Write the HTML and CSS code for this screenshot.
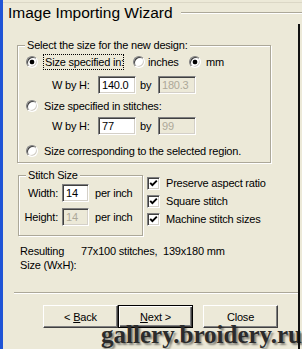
FILE: index.html
```html
<!DOCTYPE html>
<html>
<head>
<meta charset="utf-8">
<link rel="stylesheet" href="styles.css">
</head>
<body>
<div class="window">
  <div class="topline"></div>
  <div class="title-row">
    <span class="title">Image Importing Wizard</span>
    <span class="etch"></span>
  </div>

  <div class="group group-size">
    <div class="group-title">Select the size for the new design:</div>
    <div class="row r1">
      <span class="radio checked"></span>
      <span class="lbl focus">Size specified in:</span>
      <span class="radio r-inches"></span>
      <span class="lbl lbl-inches">inches</span>
      <span class="radio checked r-mm"></span>
      <span class="lbl lbl-mm">mm</span>
    </div>
    <div class="row r2">
      <span class="wbh">W by H:</span>
      <input class="field" type="text" value="140.0">
      <span class="by">by</span>
      <input class="field" type="text" value="180.3" disabled>
    </div>
    <div class="row r3">
      <span class="radio"></span>
      <span class="lbl">Size specified in stitches:</span>
    </div>
    <div class="row r4">
      <span class="wbh">W by H:</span>
      <input class="field" type="text" value="77">
      <span class="by">by</span>
      <input class="field" type="text" value="99" disabled>
    </div>
    <div class="row r5">
      <span class="radio"></span>
      <span class="lbl">Size corresponding to the selected region.</span>
    </div>
  </div>

  <div class="stitch-row">
    <div class="group group-stitch">
      <div class="group-title">Stitch Size</div>
      <div class="row s1">
        <span class="slbl">Width:</span>
        <input class="field narrow" type="text" value="14">
        <span class="unit">per inch</span>
      </div>
      <div class="row s2">
        <span class="slbl">Height:</span>
        <input class="field narrow" type="text" value="14" disabled>
        <span class="unit">per inch</span>
      </div>
    </div>
    <div class="checks">
      <div class="row check-row">
        <span class="checkbox"><svg width="9" height="9" viewBox="0 0 9 9"><path d="M1.2 3.8 L3.4 6.2 L7.8 1.6" fill="none" stroke="#000" stroke-width="1.9"/></svg></span>
        <span class="clbl">Preserve aspect ratio</span>
      </div>
      <div class="row check-row">
        <span class="checkbox"><svg width="9" height="9" viewBox="0 0 9 9"><path d="M1.2 3.8 L3.4 6.2 L7.8 1.6" fill="none" stroke="#000" stroke-width="1.9"/></svg></span>
        <span class="clbl">Square stitch</span>
      </div>
      <div class="row check-row">
        <span class="checkbox"><svg width="9" height="9" viewBox="0 0 9 9"><path d="M1.2 3.8 L3.4 6.2 L7.8 1.6" fill="none" stroke="#000" stroke-width="1.9"/></svg></span>
        <span class="clbl">Machine stitch sizes</span>
      </div>
    </div>
  </div>

  <div class="result">
    <div class="result-label">Resulting<br>Size (WxH):</div>
    <div class="result-value">77x100 stitches,&nbsp; 139x180 mm</div>
  </div>

  <div class="sep"></div>

  <div class="buttons">
    <button class="btn">&lt; <u>B</u>ack</button>
    <button class="btn btn-default"><u>N</u>ext &gt;</button>
    <button class="btn btn-close">Close</button>
  </div>

  <div class="watermark">gallery.broidery.ru</div>
</div>
</body>
</html>
```
FILE: styles.css
```css
* { box-sizing: border-box; }

html, body {
  margin: 0;
  padding: 0;
}

body {
  width: 302px;
  height: 349px;
  overflow: hidden;
  background: #ECE9D8;
  font-family: "Liberation Sans", Arial, sans-serif;
  font-size: 11px;
  letter-spacing: -0.2px;
  color: #000;
}

.window {
  position: relative;
  width: 302px;
  height: 349px;
  border-left: 3px solid #1f54d6;
  background: #ECE9D8;
  padding-top: 2px;
}

.window::after {
  content: "";
  position: absolute;
  left: 295px;
  top: 24px;
  bottom: 0;
  width: 2px;
  background: #111;
}

.topline {
  height: 1px;
  background: #dbd7c6;
}

.title-row {
  display: flex;
  align-items: flex-start;
  height: 23px;
  padding-left: 5px;
}

.title {
  font-size: 15.5px;
  letter-spacing: 0;
  line-height: 18px;
  margin-top: 1px;
  white-space: nowrap;
}

.etch {
  flex: 1;
  margin-top: 9px;
  margin-left: 8px;
  height: 2px;
  border-top: 1px solid #aca899;
  border-bottom: 1px solid #fff;
}

.group {
  border: 1px solid #aca899;
  box-shadow: inset 1px 1px 0 #fff, 1px 1px 0 #fff;
}

.group-title {
  width: max-content;
  line-height: 13px;
  height: 13px;
  margin-top: -7px;
  margin-left: 7px;
  padding: 0 2px;
  background: #ECE9D8;
  white-space: nowrap;
}

.group-size {
  width: 254px;
  margin-left: 14px;
  margin-top: 19px;
  padding-bottom: 2px;
}

.row {
  display: flex;
  align-items: center;
  height: 18px;
  white-space: nowrap;
}

.r1 { margin-top: 1px; }
.r2 { margin-top: 5px; }
.r3 { margin-top: 3px; }
.r4 { margin-top: 2px; }
.r5 { margin-top: 7px; }

.radio {
  flex: none;
  width: 12px;
  height: 12px;
  margin-left: 8px;
  border-radius: 50%;
  border: 1px solid;
  border-color: #808080 #fff #fff #808080;
  box-shadow: inset 1px 1px 0 #404040, inset -1px -1px 0 #d4d0c8;
  background: #fff;
}

.radio.checked {
  background: radial-gradient(circle, #000 0 2px, #fff 2.7px);
}

.r-inches { margin-left: 9px; }
.r-mm { margin-left: 3px; }

.lbl {
  margin-left: 6px;
  line-height: 14px;
}

.focus {
  width: 81px;
  height: 16px;
  margin-left: 5px;
  padding: 0 1px;
  border: 1px dotted #000;
  line-height: 14px;
}

.lbl-inches {
  width: 38px;
  margin-left: 3px;
}

.lbl-mm {
  margin-left: 5px;
}

.wbh {
  width: 80px;
  padding-left: 34px;
}

.by {
  width: 22px;
  padding-left: 4px;
}

.field {
  flex: none;
  width: 38px;
  height: 18px;
  margin: 0;
  padding: 0 0 0 3px;
  font: inherit;
  letter-spacing: inherit;
  color: #000;
  background: #fff;
  border: 1px solid;
  border-color: #808080 #fff #fff #808080;
  box-shadow: inset 1px 1px 0 #404040, inset -1px -1px 0 #d4d0c8;
  outline: none;
}

.field:disabled {
  background: #ECE9D8;
  color: #aca899;
}

.field.narrow {
  width: 27px;
}

.stitch-row {
  display: flex;
  align-items: flex-start;
  margin-left: 15px;
  margin-top: 12px;
}

.group-stitch {
  width: 125px;
  padding-bottom: 9px;
}

.s1 { margin-top: 2px; }
.s2 { margin-top: 6px; }

.slbl {
  width: 39px;
  margin-right: 4px;
  text-align: right;
}

.unit {
  margin-left: 6px;
}

.checks {
  margin-left: 4px;
  margin-top: -1px;
}

.checkbox {
  flex: none;
  display: flex;
  align-items: center;
  justify-content: center;
  width: 13px;
  height: 13px;
  background: #fff;
  border: 1px solid;
  border-color: #808080 #fff #fff #808080;
  box-shadow: inset 1px 1px 0 #404040, inset -1px -1px 0 #d4d0c8;
}

.clbl {
  margin-left: 6px;
}

.result {
  display: flex;
  margin-left: 17px;
  margin-top: 8px;
  line-height: 14px;
}

.result-label {
  width: 61px;
}

.result-value {
  white-space: nowrap;
}

.sep {
  width: 284px;
  height: 2px;
  margin-left: 11px;
  margin-top: 20px;
  border-top: 1px solid #aca899;
  border-bottom: 1px solid #fff;
}

.buttons {
  display: flex;
  margin-left: 40px;
  margin-top: 11px;
}

.btn {
  width: 75px;
  height: 23px;
  margin: 0;
  padding: 0;
  font: inherit;
  letter-spacing: inherit;
  color: #000;
  background: #ECE9D8;
  border: 1px solid;
  border-color: #fff #404040 #404040 #fff;
  box-shadow: inset -1px -1px 0 #808080;
}

.btn-default {
  border: 1px solid #000;
  box-shadow: inset 1px 1px 0 #fff, inset -1px -1px 0 #404040, inset -2px -2px 0 #808080;
}

.btn-close {
  margin-left: 10px;
}

.watermark {
  position: absolute;
  right: 0;
  top: 322px;
  font-family: "Liberation Serif", "Times New Roman", serif;
  font-weight: bold;
  font-size: 25px;
  line-height: 25px;
  letter-spacing: 0;
  color: #2b2b2b;
  text-shadow: 2px 2px 2px rgba(0, 0, 0, 0.45);
  white-space: nowrap;
}
```
